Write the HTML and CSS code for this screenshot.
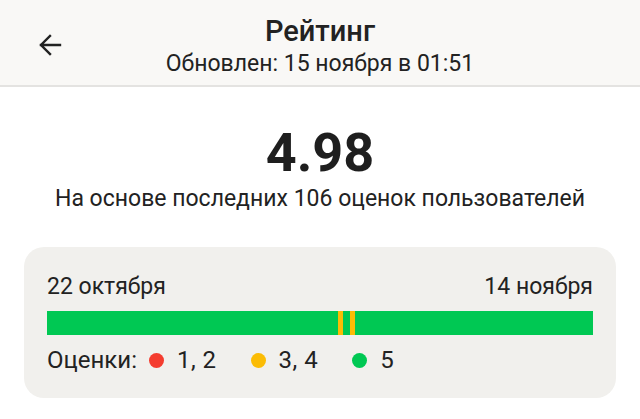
FILE: index.html
```html
<!DOCTYPE html>
<html lang="ru">
<head>
<meta charset="utf-8">
<link rel="stylesheet" href="styles.css">
</head>
<body>
<header class="top">
  <button class="back" aria-label="Назад">
    <svg width="28" height="28" viewBox="0 0 28 28"><path d="M24 14H5M14 5L5 14L14 23" fill="none" stroke="#222" stroke-width="2.4" stroke-linecap="square"/></svg>
  </button>
  <div class="titles">
    <div class="title">Рейтинг</div>
    <div class="subtitle">Обновлен: 15 ноября в 01:51</div>
  </div>
</header>
<main class="content">
  <div class="score">4.98</div>
  <div class="basis">На основе последних 106 оценок пользователей</div>
  <section class="card">
    <div class="dates"><span>22 октября</span><span>14 ноября</span></div>
    <div class="bar">
      <span class="seg green" style="width:291px"></span>
      <span class="seg yellow" style="width:5px"></span>
      <span class="seg green" style="width:7px"></span>
      <span class="seg yellow" style="width:5px"></span>
      <span class="seg green grow"></span>
    </div>
    <div class="legend">
      <span class="lbl">Оценки:</span>
      <span class="item"><i class="dot red"></i>1, 2</span>
      <span class="item"><i class="dot yel"></i>3, 4</span>
      <span class="item"><i class="dot grn"></i>5</span>
    </div>
  </section>
</main>
</body>
</html>
```
FILE: styles.css
```css
* { box-sizing: border-box; }
html, body { margin: 0; padding: 0; background: #fff; }
body { font-family: Roboto, "Noto Sans", "Liberation Sans", sans-serif; color: #222; width: 640px; height: 419px; overflow: hidden; }
.top { position: relative; height: 87px; background: #f9f8f6; border-bottom: 2px solid #e4e3e1; display: flex; justify-content: center; }
.back { position: absolute; left: 36px; top: 31px; width: 28px; height: 28px; border: 0; padding: 0; background: none; }
.titles { display: flex; flex-direction: column; align-items: center; padding-top: 14px; }
.title { font-size: 29px; font-weight: 500; line-height: 34px; color: #222; }
.subtitle { font-size: 23px; line-height: 28px; color: #222; margin-top: 2px; }
.content { display: flex; flex-direction: column; align-items: center; }
.score { font-size: 54px; font-weight: 700; line-height: 60px; margin-top: 36px; color: #1e1e1e; }
.basis { font-size: 23px; line-height: 28px; margin-top: 2px; }
.card { width: 592px; margin-top: 34px; background: #f1f0ed; border-radius: 20px; padding: 26px 23px 24px; }
.dates { display: flex; justify-content: space-between; font-size: 23px; line-height: 28px; }
.bar { display: flex; height: 24px; margin-top: 10px; }
.seg { display: block; height: 100%; }
.green { background: #00c853; }
.yellow { background: #fbbc05; }
.grow { flex: 1; }
.legend { display: flex; align-items: center; margin-top: 11px; font-size: 24px; line-height: 28px; }
.lbl { margin-right: 12px; }
.item { display: flex; align-items: center; margin-right: 34px; letter-spacing: 0.5px; }
.dot { display: inline-block; width: 15px; height: 15px; border-radius: 50%; margin-right: 13px; }
.red { background: #f43c2f; }
.yel { background: #fbbc05; }
.grn { background: #00c853; }
```
